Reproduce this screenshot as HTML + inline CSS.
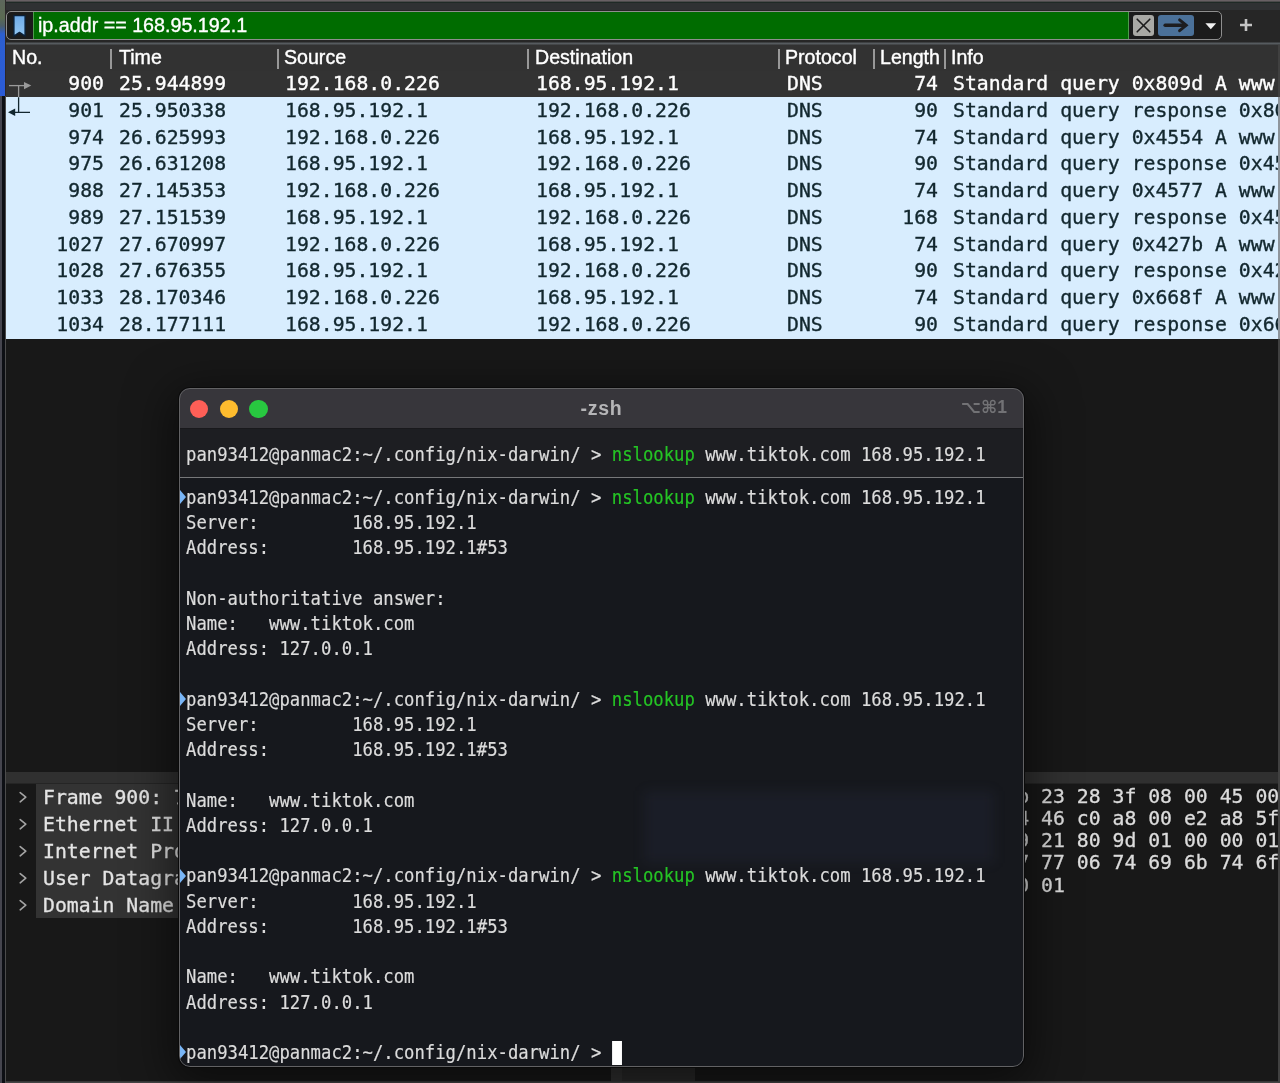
<!DOCTYPE html>
<html><head><meta charset="utf-8"><title>Wireshark</title>
<style>
html,body{margin:0;padding:0;}
body{will-change:transform;width:1280px;height:1083px;position:relative;overflow:hidden;background:#181818;font-family:"Liberation Sans",sans-serif;}
.abs{position:absolute;}
#topbar{left:0;top:0;width:1280px;height:45px;background:linear-gradient(#686064 0,#686064 1.3px,#1f2a26 1.8px,#1f2a26 3px,#2f3133 3.4px,#2f3133 9.8px,#262626 10.4px,#262626 42.2px,#565b5f 42.8px,#565b5f 44.2px,#323232 44.8px);}
#topline{display:none;}
#leftstrip{left:0;top:0;width:4.5px;height:95.5px;background:linear-gradient(#5d665c 0px,#5b6a52 18px,#4c5e6a 26px,#2c5fd0 34px,#2b5bd6 96px);}
#leftstrip2{left:0;top:95.5px;width:6px;height:988px;background:linear-gradient(90deg,#45454e 0,#45454e 1.6px,#0d0f14 2.4px,#0d0f14 5px,#4c4c4c 5.2px,#4c4c4c 6px);}
#leftline{left:4.5px;top:0;width:1.2px;height:95.5px;background:#2a2628;}
#filter{left:6px;top:11px;width:1216px;height:29px;border:1px solid #8e8e8e;border-radius:5px;background:#1b1b1b;overflow:hidden;box-sizing:border-box;}
#fgreen{left:26px;top:0;width:1096px;height:27px;background:#006c00;color:#fff;font-size:19.7px;line-height:27px;border-left:1px solid #4c9c4c;border-right:1px solid #4c9c4c;box-sizing:border-box;-webkit-text-stroke:0.35px;letter-spacing:0;}
#bx{left:1126px;top:3px;width:21px;height:21px;background:#a9a9a5;border-radius:3px;}
#bgo{left:1151px;top:3px;width:36px;height:21px;background:#4b7199;border-radius:3px;}
#bx svg,#bgo svg{display:block;}
#fgreen span{position:absolute;left:4px;top:-0.5px;white-space:nowrap;}
#thead{left:5px;top:45px;width:1275px;height:26px;background:#323232;color:#fff;font-size:19.6px;line-height:25px;-webkit-text-stroke:0.4px;}
#thead span{position:absolute;top:0;white-space:nowrap;}
#thead i{position:absolute;top:3.5px;width:1.5px;height:20px;background:#989898;}
#rows{left:6px;top:97px;width:1273px;height:241.5px;background:#d8edfe;}
.row{left:6px;width:1273px;height:26.75px;font-family:"DejaVu Sans Mono","Liberation Mono",monospace;font-size:19.8px;line-height:26.75px;color:#12272e;white-space:nowrap;overflow:hidden;-webkit-text-stroke:0.35px;}
.row span{position:absolute;top:0.5px;}
.row.sel{background:#333333;color:#fff;}
.c1{left:0;width:98px;text-align:right;}
.c2{left:113px;}
.c3{left:279px;}
.c4{left:530px;}
.c5{left:781px;}
.c6{left:860px;width:72px;text-align:right;}
.c7{left:947px;}

#split{left:5px;top:772px;width:1275px;height:12px;background:linear-gradient(#303030 0,#303030 10.5px,#252525 11.5px);}
#treebg{left:36px;top:784px;width:700px;height:134px;background:#333;}
.trow{left:6px;width:600px;overflow:hidden;height:27.0px;font-family:"DejaVu Sans Mono","Liberation Mono",monospace;font-size:19.8px;line-height:27.0px;color:#e4e4e4;white-space:nowrap;-webkit-text-stroke:0.3px;}
.trow span{position:absolute;left:37px;top:0.5px;}
.trow .chev{position:absolute;left:12px;top:6px;}
.hrow{left:1005.3px;height:22.3px;font-family:"DejaVu Sans Mono","Liberation Mono",monospace;font-size:19.8px;line-height:22.3px;color:#dcdcdc;white-space:pre;-webkit-text-stroke:0.3px;}
#botline{left:6px;top:1080.5px;width:1274px;height:3px;background:linear-gradient(#2e2e2e 0,#444 1.2px,#444 3px);}
#sbar{left:611px;top:1067px;width:84px;height:14px;background:linear-gradient(90deg,#303030 0,#303030 11px,#282828 11px);}
#rightline{left:1278px;top:45px;width:2px;height:1038px;background:#404040;}
#rightline2{left:1278px;top:97px;width:2px;height:241.5px;background:#8e959c;}
#term{left:179px;top:388px;width:845px;height:679px;border-radius:11px;background:#16181d;overflow:hidden;box-shadow:0 0 0 1px #0a0a0a;}
#tshadow{left:179px;top:388px;width:845px;height:679px;border-radius:11px;box-shadow:0 10px 45px 8px rgba(0,0,0,0.5);}
#tborder{left:0;top:0;width:845px;height:679px;border-radius:11px;border:1px solid #626264;box-sizing:border-box;}
#ttitle{left:0;top:0;width:845px;height:41px;background:#37363b;box-sizing:border-box;border-bottom:1px solid #19191c;}
.tl{position:absolute;top:11.5px;width:18.5px;height:18.5px;border-radius:50%;}
#ttext{position:absolute;left:0;width:845px;text-align:center;top:1px;line-height:38px;font-size:19.5px;letter-spacing:0.7px;font-weight:bold;color:#b5b5b7;}
#tkey{position:absolute;right:17px;top:0.5px;line-height:36px;font-size:17.5px;font-weight:bold;color:#727275;font-family:"Liberation Sans","DejaVu Sans",sans-serif;}
#tsticky{left:0;top:41px;width:845px;height:49px;background:#1d1e22;border-bottom:1px solid #77787a;box-sizing:border-box;}
#tbody{left:0;top:41px;width:845px;height:638px;}
#ghost{left:465px;top:362px;width:350px;height:72px;background:rgba(70,80,130,0.10);filter:blur(6px);}
.tline{position:absolute;left:7px;height:25.23px;line-height:25.23px;font-family:"DejaVu Sans Mono","Liberation Mono",monospace;font-size:19.2px;color:#dcdcdc;white-space:pre;transform:scaleX(0.8989);transform-origin:0 0;-webkit-text-stroke:0.2px;}
.tline b{font-weight:normal;color:#25c425;}
.mark{position:absolute;left:1px;width:0;height:0;border-left:6px solid #79b6f7;border-top:7px solid transparent;border-bottom:7px solid transparent;}
.cursor{display:inline-block;width:11.5px;height:24px;background:#fff;vertical-align:top;margin-top:1px;}
</style></head><body>
<div class="abs" id="topbar"></div><div class="abs" id="topline"></div>
<div class="abs" id="filter">
<svg class="abs" style="left:5px;top:2px" width="16" height="24" viewBox="0 0 16 24"><defs><linearGradient id="bk" x1="0" y1="0" x2="0" y2="1"><stop offset="0" stop-color="#6fabe8"/><stop offset="1" stop-color="#93c6f0"/></linearGradient></defs><path d="M1.9 1.6 H13.1 V22.2 L7.5 18.4 L1.9 22.2 Z" fill="url(#bk)" stroke="#0b2038" stroke-width="1.4" stroke-linejoin="round"/></svg>
<div class="abs" id="fgreen"><span>ip.addr == 168.95.192.1</span></div>
<div class="abs" id="bx"><svg width="21" height="21" viewBox="0 0 21 21"><path d="M4.2 4.2 L16.8 16.8 M16.8 4.2 L4.2 16.8" stroke="#1b1b1b" stroke-width="1.6" stroke-linecap="round"/></svg></div>
<div class="abs" id="bgo"><svg width="36" height="21" viewBox="0 0 36 21"><path d="M7.2 10.3 H27" stroke="#1d1d1f" stroke-width="3.6" stroke-linecap="round"/><path d="M21.6 4.9 L28.2 10.3 L21.6 15.7" fill="none" stroke="#1d1d1f" stroke-width="3" stroke-linejoin="miter" stroke-linecap="round"/></svg></div>
<svg class="abs" style="left:1198px;top:11px" width="12" height="7" viewBox="0 0 12 7"><path d="M0.4 0.3 H11.2 L5.8 6.2 Z" fill="#f2f2f2"/></svg>
</div>
<svg class="abs" style="left:1239px;top:18px" width="14" height="14" viewBox="0 0 14 14"><path d="M7 1 V13 M1 7 H13" stroke="#c4c4c4" stroke-width="2.6"/></svg>
<div class="abs" id="thead">
<span style="left:7px">No.</span><i style="left:105px"></i>
<span style="left:114px">Time</span><i style="left:272px"></i>
<span style="left:279px">Source</span><i style="left:522px"></i>
<span style="left:530px">Destination</span><i style="left:773px"></i>
<span style="left:780px">Protocol</span><i style="left:868px"></i>
<span style="left:875px">Length</span><i style="left:939px"></i>
<span style="left:946px">Info</span>
</div>
<div class="abs" id="rows"></div>
<div class="row abs sel" style="top:70.50px"><span class="c1">900</span><span class="c2">25.944899</span><span class="c3">192.168.0.226</span><span class="c4">168.95.192.1</span><span class="c5">DNS</span><span class="c6">74</span><span class="c7">Standard query 0x809d A www.tiktok.com</span></div>
<div class="row abs" style="top:97.25px"><span class="c1">901</span><span class="c2">25.950338</span><span class="c3">168.95.192.1</span><span class="c4">192.168.0.226</span><span class="c5">DNS</span><span class="c6">90</span><span class="c7">Standard query response 0x809d A www.tiktok.com A 127.0.0.1</span></div>
<div class="row abs" style="top:124.00px"><span class="c1">974</span><span class="c2">26.625993</span><span class="c3">192.168.0.226</span><span class="c4">168.95.192.1</span><span class="c5">DNS</span><span class="c6">74</span><span class="c7">Standard query 0x4554 A www.tiktok.com</span></div>
<div class="row abs" style="top:150.75px"><span class="c1">975</span><span class="c2">26.631208</span><span class="c3">168.95.192.1</span><span class="c4">192.168.0.226</span><span class="c5">DNS</span><span class="c6">90</span><span class="c7">Standard query response 0x4554 A www.tiktok.com A 127.0.0.1</span></div>
<div class="row abs" style="top:177.50px"><span class="c1">988</span><span class="c2">27.145353</span><span class="c3">192.168.0.226</span><span class="c4">168.95.192.1</span><span class="c5">DNS</span><span class="c6">74</span><span class="c7">Standard query 0x4577 A www.tiktok.com</span></div>
<div class="row abs" style="top:204.25px"><span class="c1">989</span><span class="c2">27.151539</span><span class="c3">168.95.192.1</span><span class="c4">192.168.0.226</span><span class="c5">DNS</span><span class="c6">168</span><span class="c7">Standard query response 0x4577 A www.tiktok.com A 127.0.0.1</span></div>
<div class="row abs" style="top:231.00px"><span class="c1">1027</span><span class="c2">27.670997</span><span class="c3">192.168.0.226</span><span class="c4">168.95.192.1</span><span class="c5">DNS</span><span class="c6">74</span><span class="c7">Standard query 0x427b A www.tiktok.com</span></div>
<div class="row abs" style="top:257.75px"><span class="c1">1028</span><span class="c2">27.676355</span><span class="c3">168.95.192.1</span><span class="c4">192.168.0.226</span><span class="c5">DNS</span><span class="c6">90</span><span class="c7">Standard query response 0x427b A www.tiktok.com A 127.0.0.1</span></div>
<div class="row abs" style="top:284.50px"><span class="c1">1033</span><span class="c2">28.170346</span><span class="c3">192.168.0.226</span><span class="c4">168.95.192.1</span><span class="c5">DNS</span><span class="c6">74</span><span class="c7">Standard query 0x668f A www.tiktok.com</span></div>
<div class="row abs" style="top:311.25px"><span class="c1">1034</span><span class="c2">28.177111</span><span class="c3">168.95.192.1</span><span class="c4">192.168.0.226</span><span class="c5">DNS</span><span class="c6">90</span><span class="c7">Standard query response 0x668f A www.tiktok.com A 127.0.0.1</span></div>
<div class="abs" id="split"></div>
<div class="abs" id="treebg"></div>
<div class="abs trow" style="top:783.50px"><svg class="chev" width="10" height="14" viewBox="0 0 10 14"><path d="M2.2 2.6 L7.8 7.2 L2.2 11.8" fill="none" stroke="#a4a4a4" stroke-width="1.6" stroke-linecap="round" stroke-linejoin="round"/></svg><span>Frame 900: 74 bytes on wire (592 bits), 74 bytes captured (592 bits) on interface en0, id 0</span></div>
<div class="abs trow" style="top:810.50px"><svg class="chev" width="10" height="14" viewBox="0 0 10 14"><path d="M2.2 2.6 L7.8 7.2 L2.2 11.8" fill="none" stroke="#a4a4a4" stroke-width="1.6" stroke-linecap="round" stroke-linejoin="round"/></svg><span>Ethernet II  Src: Apple_23:28:3f, Dst: Router</span></div>
<div class="abs trow" style="top:837.50px"><svg class="chev" width="10" height="14" viewBox="0 0 10 14"><path d="M2.2 2.6 L7.8 7.2 L2.2 11.8" fill="none" stroke="#a4a4a4" stroke-width="1.6" stroke-linecap="round" stroke-linejoin="round"/></svg><span>Internet Protocol Version 4, Src: 192.168.0.226, Dst: 168.95.192.1</span></div>
<div class="abs trow" style="top:864.50px"><svg class="chev" width="10" height="14" viewBox="0 0 10 14"><path d="M2.2 2.6 L7.8 7.2 L2.2 11.8" fill="none" stroke="#a4a4a4" stroke-width="1.6" stroke-linecap="round" stroke-linejoin="round"/></svg><span>User Datagram Protocol, Src Port: 55329, Dst Port: 53</span></div>
<div class="abs trow" style="top:891.50px"><svg class="chev" width="10" height="14" viewBox="0 0 10 14"><path d="M2.2 2.6 L7.8 7.2 L2.2 11.8" fill="none" stroke="#a4a4a4" stroke-width="1.6" stroke-linecap="round" stroke-linejoin="round"/></svg><span>Domain Name System (query)</span></div>
<div class="abs hrow" style="top:785.50px">ab 23 28 3f 08 00 45 00</div>
<div class="abs hrow" style="top:807.80px">d4 46 c0 a8 00 e2 a8 5f</div>
<div class="abs hrow" style="top:830.10px">c9 21 80 9d 01 00 00 01</div>
<div class="abs hrow" style="top:852.40px">77 77 06 74 69 6b 74 6f</div>
<div class="abs hrow" style="top:874.70px">00 01</div>
<div class="abs" id="botline"></div><div class="abs" id="sbar"></div><div class="abs" id="rightline"></div><div class="abs" id="rightline2"></div>
<div class="abs" id="tshadow"></div><div class="abs" id="term">
<div class="abs" id="ttitle"><i class="tl" style="left:10.75px;background:#fe5f57"></i><i class="tl" style="left:40.5px;background:#febc2e"></i><i class="tl" style="left:70.35px;background:#28c840"></i><span id="ttext">-zsh</span><span id="tkey">&#8997;&#8984;1</span></div>
<div class="abs" id="tsticky"><div class="tline" style="top:13.0px">pan93412@panmac2:~/.config/nix-darwin/ &gt; <b>nslookup</b> www.tiktok.com 168.95.192.1</div></div>
<div class="abs" id="tbody"><div class="abs" id="ghost"></div>
<i class="mark" style="top:61.30px"></i><div class="tline" style="top:56.00px">pan93412@panmac2:~/.config/nix-darwin/ &gt; <b>nslookup</b> www.tiktok.com 168.95.192.1</div>
<div class="tline" style="top:81.23px">Server:         168.95.192.1</div>
<div class="tline" style="top:106.46px">Address:        168.95.192.1#53</div>
<div class="tline" style="top:156.92px">Non-authoritative answer:</div>
<div class="tline" style="top:182.15px">Name:   www.tiktok.com</div>
<div class="tline" style="top:207.38px">Address: 127.0.0.1</div>
<i class="mark" style="top:263.14px"></i><div class="tline" style="top:257.84px">pan93412@panmac2:~/.config/nix-darwin/ &gt; <b>nslookup</b> www.tiktok.com 168.95.192.1</div>
<div class="tline" style="top:283.07px">Server:         168.95.192.1</div>
<div class="tline" style="top:308.30px">Address:        168.95.192.1#53</div>
<div class="tline" style="top:358.76px">Name:   www.tiktok.com</div>
<div class="tline" style="top:383.99px">Address: 127.0.0.1</div>
<i class="mark" style="top:439.75px"></i><div class="tline" style="top:434.45px">pan93412@panmac2:~/.config/nix-darwin/ &gt; <b>nslookup</b> www.tiktok.com 168.95.192.1</div>
<div class="tline" style="top:459.68px">Server:         168.95.192.1</div>
<div class="tline" style="top:484.91px">Address:        168.95.192.1#53</div>
<div class="tline" style="top:535.37px">Name:   www.tiktok.com</div>
<div class="tline" style="top:560.60px">Address: 127.0.0.1</div>
<i class="mark" style="top:616.36px"></i><div class="tline" style="top:611.06px">pan93412@panmac2:~/.config/nix-darwin/ &gt; <i class="cursor"></i></div>
</div><div class="abs" id="tborder"></div></div>
<svg class="abs" style="left:6px;top:76px" width="30" height="46" viewBox="0 0 30 46">
<path d="M3 9.6 H19" stroke="#9a9a9a" stroke-width="1.3" fill="none"/><path d="M12.6 9.6 V21.2" stroke="#9a9a9a" stroke-width="1.3" fill="none"/><path d="M18 5.9 L25.3 9.6 L18 13.3 Z" fill="#9a9a9a"/>
<path d="M12.6 21.2 V36.3 M8 36.3 H24" stroke="#12272e" stroke-width="1.3" fill="none"/><path d="M9.2 32.6 L2 36.3 L9.2 40 Z" fill="#12272e"/>
</svg>
<div class="abs" id="leftstrip"></div><div class="abs" id="leftstrip2"></div><div class="abs" id="leftline"></div>
</body></html>
